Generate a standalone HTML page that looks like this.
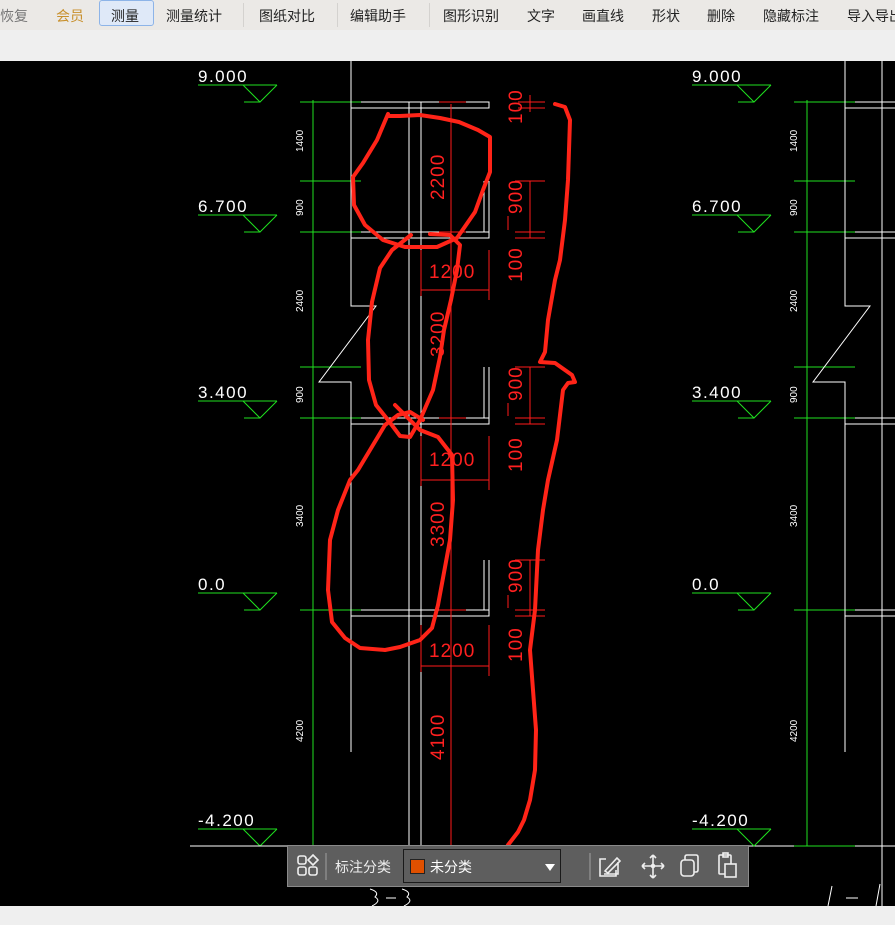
<!DOCTYPE html>
<html><head><meta charset="utf-8"><style>
*{margin:0;padding:0;box-sizing:border-box}
body{width:895px;height:925px;overflow:hidden;background:#efefef;font-family:"Liberation Sans","Noto Sans CJK SC",sans-serif;position:relative}
.tb{position:absolute;left:0;top:0;width:895px;height:30px;background:#ebe9e6}
.tb span{position:absolute;top:6px;font-size:14px;color:#222;white-space:nowrap}
.sep{position:absolute;top:3px;width:1px;height:24px;background:#d4d2cf}
.cv{position:absolute;left:0;top:61px;width:895px;height:845px;background:#000}
.bar{position:absolute;left:287px;top:845px;width:462px;height:42px;background:#5e5e5e;border:1px solid #8a8a8a}
</style></head><body>
<div class="tb">
<span style="left:0;color:#777">恢复</span>
<span style="left:56px;color:#c8902c">会员</span>
<div style="position:absolute;left:99px;top:0;width:55px;height:26px;background:#dfe9f8;border:1px solid #8db4e8;border-radius:3px"></div>
<span style="left:111px">测量</span>
<span style="left:166px">测量统计</span>
<div class="sep" style="left:243px"></div>
<span style="left:259px">图纸对比</span>
<div class="sep" style="left:337px"></div>
<span style="left:350px">编辑助手</span>
<div class="sep" style="left:429px"></div>
<span style="left:443px">图形识别</span>
<span style="left:527px">文字</span>
<span style="left:582px">画直线</span>
<span style="left:652px">形状</span>
<span style="left:707px">删除</span>
<span style="left:763px">隐藏标注</span>
<span style="left:847px">导入导出</span>
</div>
<div class="cv"></div>
<svg width="895" height="925" style="position:absolute;left:0;top:0" font-family="Liberation Sans, sans-serif">
<g fill="none" stroke-width="1">
 <g stroke="#1fe01f">
  <line x1="313" y1="100" x2="313" y2="846"/>
  <line x1="300" y1="102" x2="361" y2="102"/><line x1="300" y1="181" x2="361" y2="181"/>
  <line x1="300" y1="232" x2="361" y2="232"/><line x1="300" y1="367" x2="361" y2="367"/>
  <line x1="300" y1="418" x2="361" y2="418"/><line x1="300" y1="610" x2="361" y2="610"/>
  <line x1="300" y1="846" x2="361" y2="846"/>
  <path d="M198 85H277M243 85L260 102L277 85M244 102H260"/>
  <path d="M198 215H277M243 215L260 232L277 215M244 232H260"/>
  <path d="M198 401H277M243 401L260 418L277 401M244 418H260"/>
  <path d="M198 593H277M243 593L260 610L277 593M244 610H260"/>
  <path d="M198 829H277M243 829L260 846L277 829"/>
 </g>
 <g stroke="#fff">
  <path d="M351 61V306H376L319 382H351V752"/>
  <path d="M361 102H489V108H351"/><path d="M361 232H489V238H351M484 181V232M489 181V232"/>
  <path d="M361 418H489V424H351M484 367V418M489 367V418"/>
  <path d="M361 610H489V616H351M484 560V610M489 560V616"/>
  <line x1="409" y1="102" x2="409" y2="846"/><line x1="421" y1="102" x2="421" y2="846"/>
  <line x1="190" y1="846" x2="895" y2="846"/>
 </g>
 <g fill="#fff" stroke="none" font-size="17" letter-spacing="1.5">
  <text x="198" y="82">9.000</text><text x="198" y="212">6.700</text>
  <text x="198" y="398">3.400</text><text x="198" y="590">0.0</text><text x="198" y="826">-4.200</text>
 </g>
 <g fill="#fff" stroke="none" font-size="10">
  <text transform="translate(303,152) rotate(-90)">1400</text>
  <text transform="translate(303,216) rotate(-90)">900</text>
  <text transform="translate(303,312) rotate(-90)">2400</text>
  <text transform="translate(303,403) rotate(-90)">900</text>
  <text transform="translate(303,527) rotate(-90)">3400</text>
  <text transform="translate(303,742) rotate(-90)">4200</text>
 </g>
</g>
<g transform="translate(494,0)">
 <g fill="none" stroke="#1fe01f">
  <line x1="313" y1="100" x2="313" y2="846"/>
  <line x1="300" y1="102" x2="361" y2="102"/><line x1="300" y1="181" x2="361" y2="181"/>
  <line x1="300" y1="232" x2="361" y2="232"/><line x1="300" y1="367" x2="361" y2="367"/>
  <line x1="300" y1="418" x2="361" y2="418"/><line x1="300" y1="610" x2="361" y2="610"/>
  <line x1="300" y1="846" x2="361" y2="846"/>
  <path d="M198 85H277M243 85L260 102L277 85M244 102H260"/>
  <path d="M198 215H277M243 215L260 232L277 215M244 232H260"/>
  <path d="M198 401H277M243 401L260 418L277 401M244 418H260"/>
  <path d="M198 593H277M243 593L260 610L277 593M244 610H260"/>
  <path d="M198 829H277M243 829L260 846L277 829"/>
 </g>
 <g fill="none" stroke="#fff">
  <path d="M351 61V306H376L319 382H351V752"/>
  <path d="M361 102H489M351 108H489M361 232H489M351 238H489M361 418H489M351 424H489M361 610H489M351 616H489"/>
  <line x1="388" y1="61" x2="388" y2="906"/>
 </g>
 <g fill="#fff" font-size="17" letter-spacing="1.5">
  <text x="198" y="82">9.000</text><text x="198" y="212">6.700</text>
  <text x="198" y="398">3.400</text><text x="198" y="590">0.0</text><text x="198" y="826">-4.200</text>
 </g>
 <g fill="#fff" font-size="10">
  <text transform="translate(303,152) rotate(-90)">1400</text>
  <text transform="translate(303,216) rotate(-90)">900</text>
  <text transform="translate(303,312) rotate(-90)">2400</text>
  <text transform="translate(303,403) rotate(-90)">900</text>
  <text transform="translate(303,527) rotate(-90)">3400</text>
  <text transform="translate(303,742) rotate(-90)">4200</text>
 </g>
</g>
<g stroke="#ff1a1a" fill="none">
 <line x1="451" y1="104" x2="451" y2="846"/>
 <path d="M439 102H466M439 232H466M439 418H466M439 610H466"/>
 <path d="M421 250V296M489 250V300M421 290H489M421 436V486M489 436V490M421 480H489M421 625V672M489 625V676M421 666H489"/>
 <path d="M530 95V112M518 102H545M518 108H545M530 181V238M515 181H545M515 232H545M515 238H545"/>
 <path d="M530 367V424M515 367H545M515 418H545M515 424H545M530 560V616M515 560H545M515 610H545M515 616H545"/>
 <path d="M508 216V230M508 403V416M508 595V608"/>
</g>
<g fill="#ff2020" font-size="19" letter-spacing="1">
 <text x="429" y="278">1200</text><text x="429" y="466">1200</text><text x="429" y="657">1200</text>
 <text transform="translate(444,200) rotate(-90)">2200</text>
 <text transform="translate(444,357) rotate(-90)">3200</text>
 <text transform="translate(444,547) rotate(-90)">3300</text>
 <text transform="translate(444,760) rotate(-90)">4100</text>
 <text transform="translate(522,124) rotate(-90)">100</text>
 <text transform="translate(522,214) rotate(-90)">900</text>
 <text transform="translate(522,282) rotate(-90)">100</text>
 <text transform="translate(522,401) rotate(-90)">900</text>
 <text transform="translate(522,472) rotate(-90)">100</text>
 <text transform="translate(522,593) rotate(-90)">900</text>
 <text transform="translate(522,662) rotate(-90)">100</text>
</g>
<g stroke="#ff2418" stroke-width="4" fill="none" stroke-linejoin="round" stroke-linecap="round">
 <path d="M388 114L377 140L363 163L353 177L354 205L365 225L383 240L405 247L437 247L457 238L475 212L483 190L490 172L490 137L478 130L459 122L440 118L420 115L400 116L388 116"/>
 <path d="M411 235L392 250L380 268L372 302L368 340L369 380L376 405L388 420L400 436L410 437L420 420L433 390L440 357L444 330L451 300L457 270L460 245L450 235L430 234"/>
 <path d="M423 420L410 412L398 415L385 425L370 450L358 470L350 480L338 510L330 540L328 590L332 622L345 638L360 648L385 650L400 647L420 640L432 628L438 605L443 578L450 540L453 500L452 455L438 437L420 430L395 405"/>
 <path d="M555 104L565 107L570 120L568 180L565 220L560 260L555 280L548 320L545 352L540 362L555 363L572 375L575 382L568 383L563 390L557 440L548 480L543 510L538 550L535 610L530 650L533 690L536 730L535 770L530 800L524 820L518 832L508 845L502 858L495 866"/>
</g>
<g stroke="#fff" fill="none">
 <path d="M370 889Q380 892 375 897Q382 901 372 906M386 898H396M402 889Q412 892 407 897Q414 901 404 906"/>
 <path d="M832 886L828 906M846 898H858M880 884L876 906"/>
</g>
</svg>
<div style="position:absolute;left:0;top:906px;width:895px;height:19px;background:#efefef"></div>
<div class="bar">
 <svg width="460" height="40" style="position:absolute;left:0;top:0" fill="none" stroke="#eee" stroke-width="1.6">
  <rect x="10" y="10" width="8" height="8" rx="2"/><rect x="10" y="21" width="8" height="8" rx="2"/><rect x="21" y="21" width="8" height="8" rx="2"/><path d="M25 9L30 14L25 19L20 14Z"/>
  <line x1="38" y1="7" x2="38" y2="34" stroke="#888"/>
  <line x1="302" y1="7" x2="302" y2="34" stroke="#888"/>
  <path d="M318 13H312V30H328V24"/><path d="M316 28H330V16M317 25L329 12L332 15L320 27Z"/>
  <path d="M365 9V32M354 20H376M365 9L362 12M365 9L368 12M365 32L362 29M365 32L368 29M354 20L357 17M354 20L357 23M376 20L373 17M376 20L373 23"/><circle cx="365" cy="20" r="1.5" fill="#eee"/>
  <rect x="393" y="14" width="13" height="16" rx="3"/><path d="M397 14V11Q397 9 399 9H408Q410 9 410 11V24Q410 26 408 26H406"/>
  <rect x="431" y="9" width="12" height="19" rx="1"/><rect x="435" y="7" width="5" height="4"/><rect x="437" y="18" width="11" height="13" fill="#5e5e5e"/>
 </svg>
 <span style="position:absolute;left:47px;top:11px;font-size:14px;color:#eee">标注分类</span>
 <div style="position:absolute;left:115px;top:3px;width:158px;height:34px;border:1px solid #1a1a1a">
  <div style="position:absolute;left:6px;top:9px;width:15px;height:15px;background:#e05000;border:1px solid #222"></div>
  <span style="position:absolute;left:26px;top:7px;font-size:14px;color:#fff">未分类</span>
  <div style="position:absolute;right:5px;top:14px;width:0;height:0;border-left:5px solid transparent;border-right:5px solid transparent;border-top:7px solid #fff"></div>
 </div>
</div>
</body></html>
